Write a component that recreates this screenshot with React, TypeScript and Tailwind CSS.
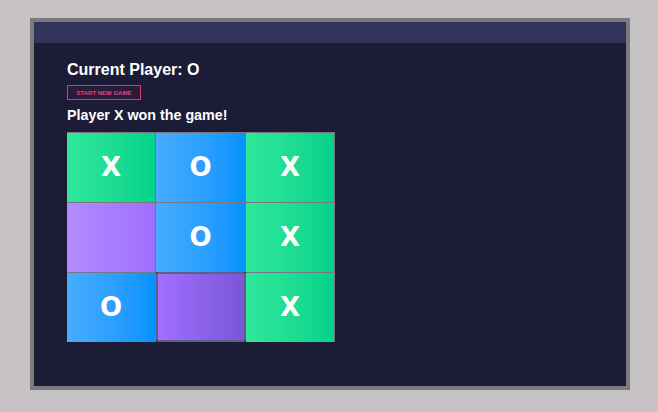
import React from 'react';

type Cell = { mark: string; tone: 'green' | 'blue' | 'violet' | 'active' };

const board: Cell[] = [
  { mark: 'X', tone: 'green' },
  { mark: 'O', tone: 'blue' },
  { mark: 'X', tone: 'green' },
  { mark: '', tone: 'violet' },
  { mark: 'O', tone: 'blue' },
  { mark: 'X', tone: 'green' },
  { mark: 'O', tone: 'blue' },
  { mark: '', tone: 'active' },
  { mark: 'X', tone: 'green' },
];

const toneClass = {
  green: 'bg-gradient-to-r from-[#2ee89b] to-[#00d28a] border-t border-r border-[#777784]',
  blue: 'bg-gradient-to-r from-[#46acff] to-[#0093ff] border-t border-r border-[#777784]',
  violet: 'bg-gradient-to-r from-[#b28cff] to-[#a06eff] border-t border-r border-[#777784]',
  active: 'bg-gradient-to-r from-[#a070ff] to-[#7a55d8] border-2 border-[#5e5e86] rounded-[3px]',
};

const App: React.FC = () => {
  return (
    <div className="w-[658px] h-[412px] bg-[#c6c2c6] pt-[18px] pl-[30px] font-['Liberation_Sans',Arial,sans-serif]">
      <div className="w-[600px] h-[372px] border-4 border-[#7b7b7b] bg-[#1c1c36] flex flex-col">
        {/* Header */}
        <div className="h-[21px] bg-[#33335a]" />

        {/* Game */}
        <div className="pl-[33px] pt-[17px]">
          <h2 className="text-white font-bold text-[16px] leading-[20px]">Current Player: O</h2>
          <button className="mt-[5px] h-[15px] w-[74px] flex items-center justify-center border border-[#d4386c] bg-[#2b1a3a] text-[#ee3f74] text-[6px] font-bold uppercase leading-none">
            Start new game
          </button>
          <p className="mt-[6px] text-white font-bold text-[14.3px] leading-[18px]">Player X won the game!</p>

          <div className="mt-[8px] grid grid-cols-[89px_90px_89px] grid-rows-[70px_70px_70px] w-[268px]">
            {board.map((cell, i) => (
              <div
                key={i}
                className={`flex items-center justify-center text-white font-bold text-[26px] font-['DejaVu_Sans',sans-serif] ${toneClass[cell.tone]}`}
              >
                {cell.mark}
              </div>
            ))}
          </div>
        </div>
      </div>
    </div>
  );
};

export default App;
